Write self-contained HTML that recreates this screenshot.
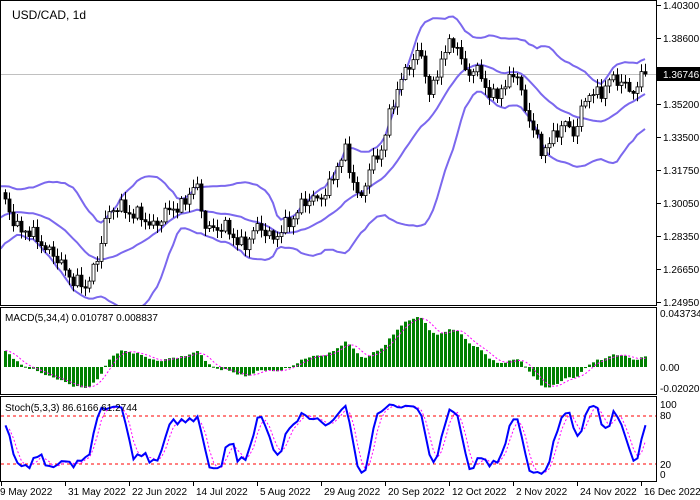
<!DOCTYPE html>
<html><head><meta charset="utf-8"><style>
html,body{margin:0;padding:0;background:#fff;}
svg{display:block;font-family:"Liberation Sans",sans-serif;}
</style></head><body>
<svg id="s" width="700" height="500" xmlns="http://www.w3.org/2000/svg">
<defs>
<clipPath id="c1"><rect x="1" y="1" width="655" height="304"/></clipPath>
<clipPath id="c2"><rect x="1" y="308" width="655" height="86"/></clipPath>
<clipPath id="c3"><rect x="1" y="397" width="655" height="84"/></clipPath>
</defs>
<rect x="0" y="0" width="700" height="500" fill="#fff"/>
<g id="g1" clip-path="url(#c1)"></g>
<g id="g2" clip-path="url(#c2)"></g>
<g id="g3" clip-path="url(#c3)"></g>
<g id="ax"></g>
</svg>
<script>
var NS="http://www.w3.org/2000/svg";
function el(p,t,a,txt){var e=document.createElementNS(NS,t);for(var k in a)e.setAttribute(k,a[k]);if(txt!=null)e.textContent=txt;document.getElementById(p).appendChild(e);return e;}
var kp=[[-170,265],[-80,245],[-20,205],[0,195],[20,230],[40,240],[60,265],[85,290],[95,265],[105,220],[120,205],[135,215],[150,225],[165,215],[180,205],[195,185],[205,225],[225,230],[245,245],[260,225],[275,240],[290,220],[300,205],[315,200],[330,185],[345,150],[360,205],[370,165],[380,150],[390,115],[400,80],[410,60],[420,55],[430,95],[440,60],[455,40],[465,70],[480,75],[490,95],[505,90],[515,65],[525,110],[540,150],[550,140],[565,125],[575,130],[585,100],[600,90],[610,80],[625,85],[635,90],[645,74]];
function interp(x){for(var i=0;i<kp.length-1;i++){if(x<=kp[i+1][0]){var a=kp[i],b=kp[i+1];return a[1]+(b[1]-a[1])*(x-a[0])/(b[0]-a[0]);}}return kp[kp.length-1][1];}
var N=161,W=40,T=N+W;var xs=[],C=[],O=[],H=[],L=[];
for(var i=0;i<T;i++){var x=645-(T-1-i)*4;xs.push(x);var n=1.4*(3*Math.sin(i*1.7)+2*Math.sin(i*0.9+1)+2.5*Math.sin(i*2.9));C.push(i==T-1?74:interp(x)+n);}
for(var i=0;i<T;i++){O.push(i?C[i-1]:C[0]);var r1=Math.abs(Math.sin(i*3.7))*7+1,r2=Math.abs(Math.cos(i*2.3))*7+1;H.push(Math.min(O[i],C[i])-r1);L.push(Math.max(O[i],C[i])+r2);}
el("g1","line",{x1:1,y1:74.5,x2:656,y2:74.5,stroke:"#c0c0c0","stroke-width":1});
var mid=[],up=[],lo=[];
for(var i=19;i<T;i++){var s=0;for(var j=i-19;j<=i;j++)s+=C[j];var m=s/20,v=0;for(var j=i-19;j<=i;j++)v+=(C[j]-m)*(C[j]-m);var sd=Math.sqrt(v/20);mid.push([xs[i],m]);up.push([xs[i],m-2*sd]);lo.push([xs[i],m+2*sd]);}
function pl(g,arr,st){el(g,"polyline",Object.assign({points:arr.map(function(p){return p[0].toFixed(1)+","+p[1].toFixed(1)}).join(" "),fill:"none"},st));}
[mid,up,lo].forEach(function(a){pl("g1",a,{stroke:"#7b68ee","stroke-width":2});});
for(var i=W;i<T;i++){var x=xs[i];el("g1","line",{x1:x+.5,y1:H[i],x2:x+.5,y2:L[i],stroke:"#000","stroke-width":1});var t=Math.min(O[i],C[i]),b=Math.max(O[i],C[i]);if(b-t<1)b=t+1;var bull=C[i]<O[i];el("g1","rect",{x:x-1,y:t,width:3,height:b-t,fill:bull?"#fff":"#000",stroke:"#000","stroke-width":0.8});}
el("g1","text",{x:12,y:19,"font-size":12,fill:"#000"},"USD/CAD, 1d");
var pp=0.017/33;function price(y){return 1.403-(y-5)*pp;}
function ema(src,n){var k=2/(n+1),r=[],e=src[0];for(var i=0;i<src.length;i++){e=i?src[i]*k+e*(1-k):src[0];r.push(e);}return r;}
var P=C.map(price),e5=ema(P,5),e34=ema(P,34),mc=[];for(var i=0;i<T;i++)mc.push(e5[i]-e34[i]);
var sg=[];for(var i=0;i<T;i++){var s=0,c=0;for(var j=Math.max(0,i-3);j<=i;j++){s+=mc[j];c++;}sg.push(s/c);}
function my(v){return 367-v*1235;}
var sp=[];for(var i=W;i<T;i++){var y=my(mc[i]);el("g2","rect",{x:xs[i]-1,y:Math.min(y,367),width:3,height:Math.max(1,Math.abs(y-367)),fill:"#008000"});sp.push([xs[i]+.5,my(sg[i])]);}
pl("g2",sp,{stroke:"#ff00ff","stroke-width":1,"stroke-dasharray":"2,2"});
el("g2","text",{x:5,y:321,"font-size":10,fill:"#000"},"MACD(5,34,4) 0.010787 0.008837");
var kr=[];for(var i=0;i<T;i++){var hh=-1e9,ll=1e9;for(var j=Math.max(0,i-4);j<=i;j++){hh=Math.max(hh,-H[j]);ll=Math.min(ll,-L[j]);}kr.push(hh==ll?50:(-C[i]-ll)/(hh-ll)*100);}
function sma(a,n){var r=[];for(var i=0;i<a.length;i++){var s=0,c=0;for(var j=Math.max(0,i-n+1);j<=i;j++){s+=a[j];c++;}r.push(s/c);}return r;}
var K=sma(kr,3),D=sma(K,3);function sy(v){return 480-v*0.8;}
el("g3","line",{x1:1,y1:416,x2:656,y2:416,stroke:"#ff0000","stroke-dasharray":"3,3"});
el("g3","line",{x1:1,y1:464,x2:656,y2:464,stroke:"#ff0000","stroke-dasharray":"3,3"});
var ka=[],da=[];for(var i=W;i<T;i++){ka.push([xs[i]+.5,sy(K[i])]);da.push([xs[i]+.5,sy(D[i])]);}
pl("g3",da,{stroke:"#ff00ff","stroke-width":1,"stroke-dasharray":"2,2"});
pl("g3",ka,{stroke:"#0000ff","stroke-width":2});
el("g3","text",{x:5,y:411,"font-size":10,fill:"#000"},"Stoch(5,3,3) 86.6166 61.2744");
[[0.5,0.5,656,305],[0.5,307.5,656,87],[0.5,396.5,656,85]].forEach(function(r){el("ax","rect",{x:r[0],y:r[1],width:r[2],height:r[3],fill:"none",stroke:"#000","stroke-width":1});});
var lab=[["1.40300",5],["1.38600",38],["1.35200",104],["1.33500",137],["1.31750",170],["1.30050",203],["1.28350",236],["1.26650",269],["1.24950",302]];
lab.forEach(function(l){el("ax","line",{x1:657,y1:l[1]+.5,x2:661,y2:l[1]+.5,stroke:"#000"});el("ax","text",{x:663,y:l[1]+4,"font-size":10,fill:"#000"},l[0]);});
el("ax","rect",{x:657,y:67,width:43,height:14,fill:"#000"});
el("ax","text",{x:663,y:78,"font-size":10,fill:"#fff"},"1.36746");
[["0.043734",313],["0.00",367],["-0.020207",388]].forEach(function(l){el("ax","text",{x:660,y:l[1]+4,"font-size":10,fill:"#000"},l[0]);});
[["100",404],["80",415],["20",464],["0",474]].forEach(function(l){el("ax","text",{x:660,y:l[1]+4,"font-size":10,fill:"#000"},l[0]);});
var dl=["9 May 2022","31 May 2022","22 Jun 2022","14 Jul 2022","5 Aug 2022","29 Aug 2022","20 Sep 2022","12 Oct 2022","2 Nov 2022","24 Nov 2022","16 Dec 2022"];
dl.forEach(function(d,i){var x=1+i*64;el("ax","line",{x1:x+.5,y1:482,x2:x+.5,y2:486,stroke:"#000"});el("ax","text",{x:i==0?0:x+3,y:495,"font-size":10,fill:"#000"},d);});
</script>
</body></html>
